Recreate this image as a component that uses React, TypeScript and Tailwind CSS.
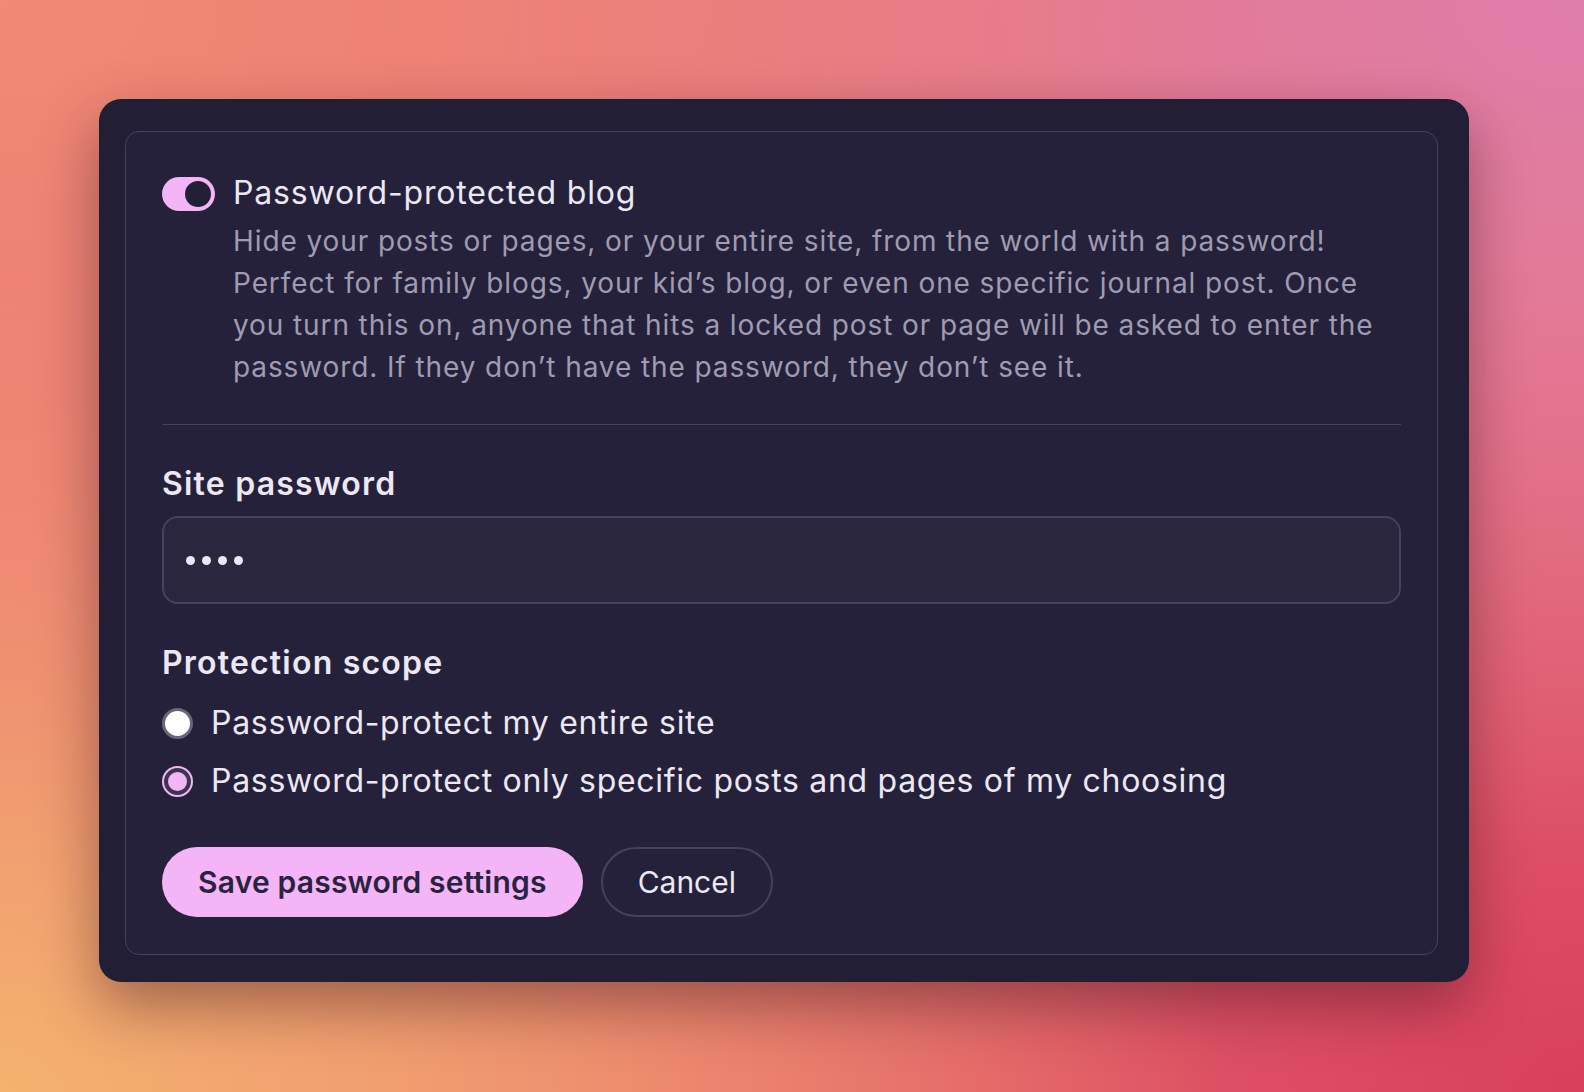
import React, { useState } from 'react';

const bg =
  'bg-[radial-gradient(at_0%_0%,#f08a74_0%,transparent_55%),radial-gradient(at_100%_0%,#df7eaa_0%,transparent_55%),radial-gradient(at_0%_100%,#f4b26e_0%,transparent_55%),radial-gradient(at_100%_100%,#d8405c_0%,transparent_55%),linear-gradient(#ea7474,#ea7474)]';

function Radio({ checked }: { checked: boolean }) {
  return checked ? (
    <span className="w-[31px] h-[31px] shrink-0 rounded-full bg-[#f3b5f6] p-[2px]">
      <span className="block w-full h-full rounded-full border-[4px] border-[#3b3650] bg-[#f3b5f6]" />
    </span>
  ) : (
    <span className="w-[31px] h-[31px] shrink-0 rounded-full bg-white border-[3px] border-[#6a6677]" />
  );
}

export default function App() {
  const [enabled, setEnabled] = useState(true);
  const [scope, setScope] = useState<'all' | 'some'>('some');

  return (
    <div
      className={`w-[1584px] h-[1092px] ${bg} pt-[99px] pl-[99px] font-['Inter','Noto_Sans',sans-serif]`}
    >
      <div className="w-[1370px] h-[883px] rounded-[22px] bg-[#221e35] pt-[32px] pl-[26px] pr-[31px] pb-[27px] shadow-[0_24px_60px_rgba(60,20,30,0.45)]">
        <div className="h-full rounded-[14px] border border-[#47425c] bg-[#25213a] p-[36px]">
          {/* toggle + description */}
          <div className="flex gap-[18px]">
            <button
              onClick={() => setEnabled(!enabled)}
              className={`mt-[9px] w-[53px] h-[34px] shrink-0 rounded-full flex items-center px-[4px] ${
                enabled ? 'bg-[#f3b5f6] justify-end' : 'bg-[#4a4560] justify-start'
              }`}
            >
              <span className="w-[26px] h-[26px] rounded-full bg-[#231f36]" />
            </button>
            <div>
              <div className="mt-[1px] text-[32px] leading-[48px] tracking-[0.85px] text-[#ece8f3]">
                Password-protected blog
              </div>
              <p className="mt-[3px] text-[28px] leading-[42px] tracking-[0.9px] text-[#9f9bb0] w-[1152px]">
                Hide your posts or pages, or your entire site, from the world with a password! Perfect for
                family blogs, your kid’s blog, or even one specific journal post. Once you turn this on,
                anyone that hits a locked post or page will be asked to enter the password. If they don’t
                have the password, they don’t see it.
              </p>
            </div>
          </div>

          <div className="mt-[36px] h-px bg-[#47425c]" />

          <div className="mt-[35px] text-[32px] leading-[48px] font-semibold tracking-[1.2px] text-[#ece8f3]">
            Site password
          </div>
          <div className="mt-[8px] h-[88px] rounded-[16px] border-2 border-[#47425c] bg-[#2a263e] flex items-center pl-[22px]">
            <span className="flex gap-[7px]">
              <span className="w-[9px] h-[9px] rounded-full bg-[#ece8f3]" />
              <span className="w-[9px] h-[9px] rounded-full bg-[#ece8f3]" />
              <span className="w-[9px] h-[9px] rounded-full bg-[#ece8f3]" />
              <span className="w-[9px] h-[9px] rounded-full bg-[#ece8f3]" />
            </span>
          </div>

          <div className="mt-[35px] text-[32px] leading-[48px] font-semibold tracking-[1.2px] text-[#ece8f3]">
            Protection scope
          </div>
          <div className="mt-[12px] flex flex-col gap-[10px]">
            <label className="flex items-center gap-[18px] cursor-pointer" onClick={() => setScope('all')}>
              <Radio checked={scope === 'all'} />
              <span className="text-[32px] leading-[48px] tracking-[0.7px] text-[#ece8f3]">
                Password-protect my entire site
              </span>
            </label>
            <label className="flex items-center gap-[18px] cursor-pointer" onClick={() => setScope('some')}>
              <Radio checked={scope === 'some'} />
              <span className="text-[32px] leading-[48px] tracking-[0.7px] text-[#ece8f3]">
                Password-protect only specific posts and pages of my choosing
              </span>
            </label>
          </div>

          <div className="mt-[42px] flex gap-[18px]">
            <button className="h-[70px] px-[36px] rounded-full bg-[#f3b5f6] text-[30px] font-semibold tracking-[0.2px] text-[#2a2340]">
              Save password settings
            </button>
            <button className="h-[70px] px-[35px] rounded-full border-2 border-[#47425c] text-[30px] text-[#ece8f3]">
              Cancel
            </button>
          </div>
        </div>
      </div>
    </div>
  );
}
